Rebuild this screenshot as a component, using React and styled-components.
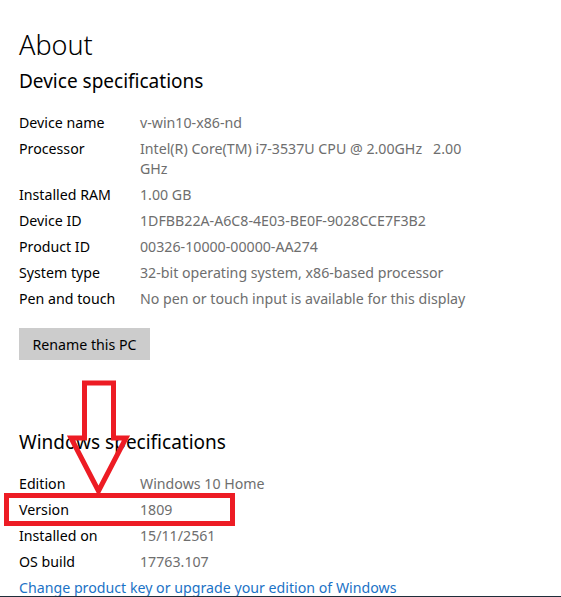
import React from "react";
import styled, { createGlobalStyle } from "styled-components";

const GlobalStyle = createGlobalStyle`
  html, body {
    margin: 0;
    padding: 0;
    background: #ffffff;
  }
  body {
    font-family: "Noto Sans", "Open Sans", sans-serif;
    color: #000;
  }
`;

const Page = styled.div`
  position: relative;
  width: 561px;
  height: 597px;
  overflow: hidden;
  box-sizing: border-box;
  padding: 27px 0 0 19px;
  background: #fff;
`;

const Title = styled.h1`
  margin: 0;
  font-size: 27px;
  line-height: 36px;
  font-weight: 300;
  color: #000;
`;

const SectionTitle = styled.h2`
  margin: ${(p) => p.$top || 0}px 0 18px;
  font-size: 19px;
  line-height: 28px;
  font-weight: 400;
  color: #000;
`;

const SpecList = styled.div`
  display: flex;
  flex-direction: column;
  gap: 6px;
`;

const Row = styled.div`
  display: grid;
  grid-template-columns: 121px 1fr;
  font-size: 14.2px;
  line-height: 20px;
`;

const Label = styled.div`
  color: #000;
`;

const Value = styled.div`
  color: #6e6e6e;
  white-space: pre;
`;

const Button = styled.button`
  margin-top: 19px;
  height: 32px;
  width: 131px;
  border: none;
  background: #cccccc;
  font-family: inherit;
  font-size: 14.2px;
  color: #000;
  padding: 0;
`;

const Link = styled.a`
  display: block;
  margin-top: 6px;
  font-size: 14.2px;
  line-height: 20px;
  color: #1b72c6;
  text-decoration: none;
`;

const Annotation = styled.svg`
  position: absolute;
  left: 0;
  top: 0;
  pointer-events: none;
`;

const BottomRule = styled.div`
  position: absolute;
  left: 0;
  right: 0;
  bottom: 0;
  height: 1px;
  background: #1f2d3a;
`;

const device = [
  ["Device name", ["v-win10-x86-nd"]],
  ["Processor", ["Intel(R) Core(TM) i7-3537U CPU @ 2.00GHz   2.00", "GHz"]],
  ["Installed RAM", ["1.00 GB"]],
  ["Device ID", ["1DFBB22A-A6C8-4E03-BE0F-9028CCE7F3B2"]],
  ["Product ID", ["00326-10000-00000-AA274"]],
  ["System type", ["32-bit operating system, x86-based processor"]],
  ["Pen and touch", ["No pen or touch input is available for this display"]],
];

const windows = [
  ["Edition", ["Windows 10 Home"]],
  ["Version", ["1809"]],
  ["Installed on", ["15/11/2561"]],
  ["OS build", ["17763.107"]],
];

const Specs = ({ items }) => (
  <SpecList>
    {items.map(([label, lines]) => (
      <Row key={label}>
        <Label>{label}</Label>
        <Value>
          {lines.map((l, i) => (
            <div key={i}>{l}</div>
          ))}
        </Value>
      </Row>
    ))}
  </SpecList>
);

export default function App() {
  return (
    <>
      <GlobalStyle />
      <Page>
        <Title>About</Title>
        <SectionTitle $top={4}>Device specifications</SectionTitle>
        <Specs items={device} />
        <Button>Rename this PC</Button>
        <SectionTitle $top={68}>Windows specifications</SectionTitle>
        <Specs items={windows} />
        <Link href="#">Change product key or upgrade your edition of Windows</Link>

        <Annotation width="561" height="597" viewBox="0 0 561 597">
          <polygon
            points="84.5,383 113.5,383 113.5,438 126,438 98.5,491 71,438 84.5,438"
            fill="none"
            stroke="#ed1c24"
            strokeWidth="5"
            strokeLinejoin="miter"
          />
          <rect
            x="6.5"
            y="495.5"
            width="226"
            height="28"
            fill="none"
            stroke="#ed1c24"
            strokeWidth="5"
          />
        </Annotation>
        <BottomRule />
      </Page>
    </>
  );
}
